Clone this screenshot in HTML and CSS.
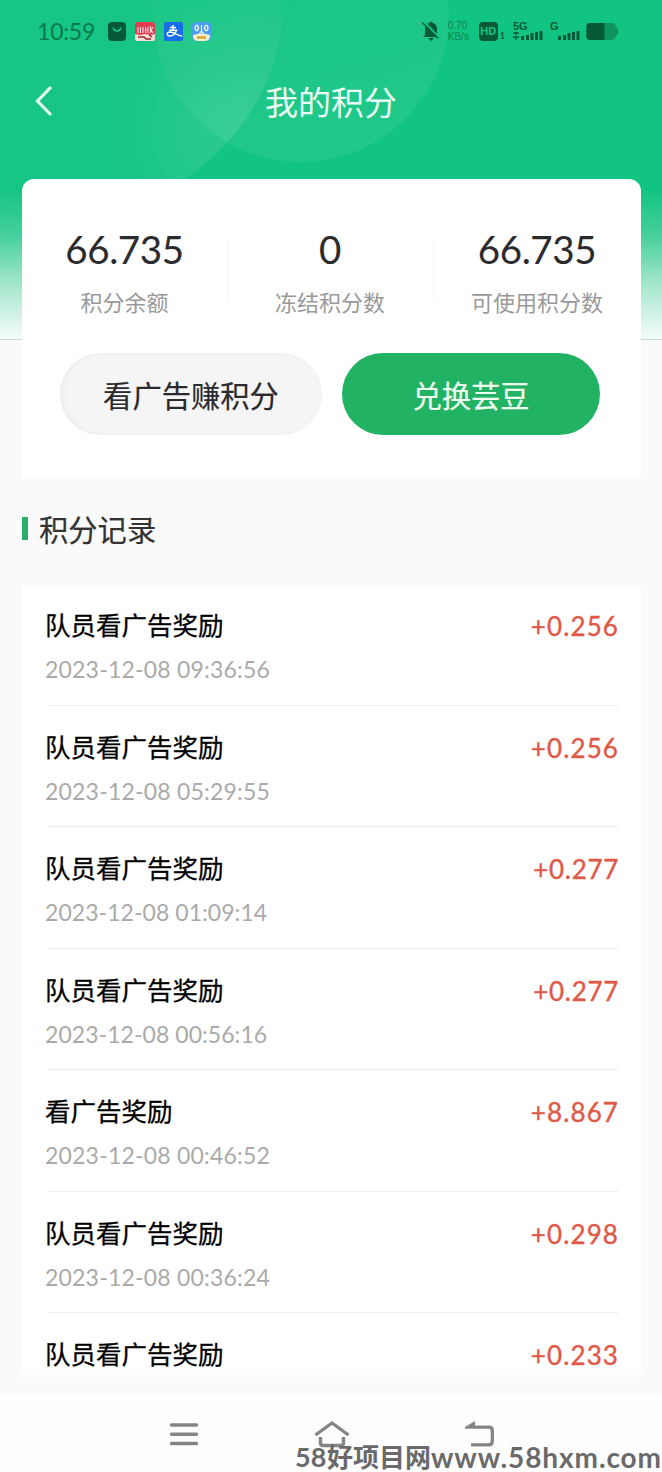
FILE: index.html
```
<!DOCTYPE html>
<html lang="zh-CN">
<head>
<meta charset="utf-8">
<title>我的积分</title>
<link rel="stylesheet" href="styles.css">
</head>
<body>
<div class="phone">
  <header class="hero">
    <svg class="hero-art" viewBox="0 0 662 340" aria-hidden="true">
      <defs>
        <radialGradient id="ringA" gradientUnits="userSpaceOnUse" cx="240" cy="130" r="130"><stop offset="0" stop-color="#fff" stop-opacity=".12"/><stop offset="1" stop-color="#fff" stop-opacity=".02"/></radialGradient>
        <linearGradient id="ringB" x1="0" y1="0" x2=".3" y2="1"><stop offset=".2" stop-color="#fff" stop-opacity=".02"/><stop offset="1" stop-color="#fff" stop-opacity=".06"/></linearGradient>
      </defs>
      <circle cx="66" cy="-4" r="218" fill="url(#ringA)"/>
      <circle cx="301" cy="14" r="148" fill="url(#ringB)"/>
    </svg>
    <div class="status">
      <div class="status-left">
        <span class="clock">10:59</span>
        <svg width="18" height="19" viewBox="0 0 18 19"><rect width="18" height="19" rx="4" fill="#075a36"/><path d="M5 5.500c1 4.500 7 4.500 8 0" fill="none" stroke="#16c583" stroke-width="1.500"/></svg>
        <svg width="20" height="19" viewBox="0 0 20 19"><rect width="20" height="19" rx="3" fill="#e23d50"/><path d="M3 5v6M5.500 5v6M8 5v6M10.500 5v6M13 5v6M10 8h3M15.500 4v7M18 5l-2 3 2 3" stroke="#fbd9dc" stroke-width="1.100" fill="none"/><path d="M0 12l5 1 5-1 6 1 4-1v5q0 2-3 2H3q-3 0-3-2z" fill="#f5dcd5"/><path d="M3 15h6l2 2h5M14 13l3 2" stroke="#9c2430" stroke-width="1.500" fill="none"/></svg>
        <svg width="19" height="19" viewBox="0 0 19 19"><rect width="19" height="19" rx="2" fill="#176ee8"/><path d="M6 5.500h6M9 3v5M5 8.300h7.500c-1.500 4-3.500 5.700-6.500 5.700-4 0-3.500-4 0-4 4 0 7 3.500 12 4" fill="none" stroke="#fff" stroke-width="1.500"/></svg>
        <svg width="19" height="19" viewBox="0 0 19 19"><rect width="19" height="19" rx="4" fill="#4a9df0"/><path d="M4.500 3c-2 2-2 4 0 6M5 3c2 2 2 4 0 6M9.500 3v7M14 3c-2 2-2 4 0 6M14.500 3c2 2 2 4 0 6M9.500 9l-3 4M9.500 9l3 4" fill="none" stroke="#fff" stroke-width="1.200"/><path d="M1 13q8-3 17 0v2q-1 4-5 4H6q-4 0-5-4z" fill="#f4eecb"/><path d="M5 15.500h9" stroke="#dba62a" stroke-width="2.500"/></svg>
      </div>
      <div class="status-right">
        <svg width="18" height="20" viewBox="0 0 18 20"><path d="M3 14V8q0-5 4-6 2-3 4 0 4 1 4 6v6l2 2H1zM6 17h6l-3 3z" fill="#075a36"/><path d="M2 1l16 16" stroke="#12c481" stroke-width="1.800"/><path d="M0 1.500l16 16" stroke="#075a36" stroke-width="1.200"/></svg>
        <span class="rate"><span>0.70</span><span>KB/s</span></span>
        <span class="hd">HD</span><span class="sim">1</span>
        <svg class="net" width="30" height="20" viewBox="0 0 30 20"><text x="0" y="9" class="net-label">5G</text><path d="M3 11v3M0 12h6M0 16h6M3 16v3" stroke="#075a36" stroke-width="1.300"/><path d="M8 15h3v4H8zM13 14h3v5h-3zM17.500 12h3v7h-3zM22 11h3v8h-3zM26.500 10h3v9h-3z" fill="#075a36"/></svg>
        <svg class="net2" width="30" height="20" viewBox="0 0 30 20"><text x="0" y="9" class="net-label">G</text><path d="M8 15h3v4H8zM13 14h3v5h-3zM17.500 12h3v7h-3zM22 11h3v8h-3zM26.500 10h3v9h-3z" fill="#075a36"/></svg>
        <svg width="33" height="17" viewBox="0 0 34 18"><path d="M4 0h24q2 0 3 3l3 5v2l-3 5q-1 3-3 3H4q-4 0-4-4V4q0-4 4-4z" fill="#0e965f"/><path d="M4 0h15v18H4q-4 0-4-4V4q0-4 4-4z" fill="#075a36"/></svg>
      </div>
    </div>
    <div class="titlebar">
      <svg class="back" width="18" height="32" viewBox="0 0 18 32"><path d="M16 2L2.500 16 16 30" fill="none" stroke="#e4fff3" stroke-width="3.200"/></svg>
      <h1>我的积分</h1>
    </div>
  </header>

  <main>
    <section class="card">
      <div class="stats">
        <div class="stat"><strong>66.735</strong><span>积分余额</span></div>
        <div class="stat"><strong>0</strong><span>冻结积分数</span></div>
        <div class="stat"><strong>66.735</strong><span>可使用积分数</span></div>
      </div>
      <div class="actions">
        <button class="btn earn">看广告赚积分</button>
        <button class="btn swap">兑换芸豆</button>
      </div>
    </section>
    <h2>积分记录</h2>
    <ul class="records">
      <li><div><b>队员看广告奖励</b><time>2023-12-08 09:36:56</time></div><em>+0.256</em></li>
      <li><div><b>队员看广告奖励</b><time>2023-12-08 05:29:55</time></div><em>+0.256</em></li>
      <li><div><b>队员看广告奖励</b><time class="tight">2023-12-08 01:09:14</time></div><em class="tight">+0.277</em></li>
      <li><div><b>队员看广告奖励</b><time class="tight">2023-12-08 00:56:16</time></div><em class="tight">+0.277</em></li>
      <li><div><b>看广告奖励</b><time>2023-12-08 00:46:52</time></div><em>+8.867</em></li>
      <li><div><b>队员看广告奖励</b><time>2023-12-08 00:36:24</time></div><em>+0.298</em></li>
      <li><div><b>队员看广告奖励</b></div><em>+0.233</em></li>
    </ul>
  </main>

  <nav class="navbar">
    <svg width="28" height="24" viewBox="0 0 28 24"><path d="M1.500 3h25M1.500 12.300h25M1.500 21.500h25" stroke="#858585" stroke-width="3.400" stroke-linecap="round"/></svg>
    <svg width="36" height="28" viewBox="0 0 36 28"><path d="M1.500 15L18 3l16.500 12M6.500 17v6q0 2.500 2.500 2.500h18q2.500 0 2.500-2.500v-6" fill="none" stroke="#858585" stroke-width="3.400"/></svg>
    <svg width="30" height="26" viewBox="0 0 30 26"><path d="M0 6L10 0v4.500h14q5 0 5 5V20q0 5.500-5 5.500H6v-3.200h17q2.700 0 2.700-2.500V10q0-2.300-2.700-2.300H0z" fill="#858585"/></svg>
  </nav>
  <div class="watermark"><span class="wm-num">58</span><span class="wm-cn">好项目网</span><span class="wm-url">www.58hxm.com</span></div>
</div>
</body>
</html>
```
FILE: styles.css
```
* { box-sizing: border-box; margin: 0; padding: 0; }
body { width: 662px; height: 1472px; overflow: hidden; font-family: Lato, "Noto Sans CJK SC", sans-serif; }
.phone { position: relative; display: flex; flex-direction: column; height: 1472px; background: #fafafa; }
.hero { position: relative; height: 340px; margin-bottom: -161px; flex: none; border-bottom: 1px solid #c3dcd9; background: linear-gradient(#12c481 0, #12c481 190px, #45d09b 235px, #a5e7cd 285px, #f4fbf9 338px); }
.hero-art { position: absolute; inset: 0; width: 662px; height: 340px; }
.status { position: relative; display: flex; justify-content: space-between; padding: 20px 43px 0 37px; height: 62px; }
.status-left, .status-right { display: flex; align-items: center; height: 22px; }
.status-left { gap: 9px; }
.clock { width: 62px; font-size: 23px; letter-spacing: -.2px; color: #087a4b; white-space: nowrap; }
.status-right { color: #075a36; }
.rate { display: flex; flex-direction: column; width: 25px; margin-left: 8px; font: 10px/11px "Liberation Sans", sans-serif; color: #0a8550; }
.hd { width: 19px; height: 19px; margin-left: 6px; border-radius: 4px; background: #075a36; color: #16c583; font: bold 11px/19px "Liberation Sans", sans-serif; text-align: center; }
.sim { margin: 9px 0 0 2px; font-size: 9px; font-weight: bold; }
.net { margin-left: 8px; }
.net2 { margin-left: 7px; margin-right: 6px; }
.net-label { font: bold 11px "Liberation Sans", sans-serif; fill: #075a36; }
.titlebar { position: relative; display: flex; justify-content: center; align-items: center; height: 80px; }
.back { position: absolute; left: 35px; top: 23px; }
h1 { color: #e9fff6; font-size: 33px; line-height: 82px; font-weight: 400; }
main { position: relative; flex: 1; padding: 0 21px 0 22px; }
.card { height: 300px; padding-top: 49px; background: #fff; border-radius: 12px 12px 4px 4px; }
.stats { display: grid; grid-template-columns: 205px 206px 1fr; height: 125px; }
.stat { display: flex; flex-direction: column; align-items: center; }
.stat + .stat { background: linear-gradient(#f5f5f5, #f5f5f5) 0 12px / 1px 60px no-repeat; }
.stat strong { flex: none; font-size: 38.500px; line-height: 43px; height: 54px; font-weight: 400; letter-spacing: -.4px; color: #2b2b2e; -webkit-text-stroke: .1px; }
.stat span { font-size: 22px; line-height: 42px; color: #999; white-space: nowrap; }
.actions { display: flex; gap: 20px; padding-left: 38px; }
.btn { height: 82px; border: 0; border-radius: 41px; padding-top: 2px; font: 400 29.300px/82px Lato, "Noto Sans CJK SC", sans-serif; -webkit-text-stroke: .2px; }
.earn { width: 262px; background: #f5f5f6; color: #2b2b2e; box-shadow: inset 2px 0 4px #ebebed; }
.swap { width: 258px; background: #22b264; color: #efffef; }
h2 { display: flex; align-items: center; gap: 11px; height: 48px; margin-top: 25px; font-size: 29.300px; font-weight: 400; color: #333; -webkit-text-stroke: .2px; }
h2::before { content: ""; width: 6px; height: 23px; background: #29ad6b; }
.records { margin-top: 33px; height: 811px; background: linear-gradient(#fff 780px, #fafafa 796px); overflow: hidden; list-style: none; padding: 0 23px; }
.records li { display: flex; justify-content: space-between; height: 121.500px; padding-top: 19px; background: linear-gradient(#eee, #eee) 3px calc(100% - 1px) / 100% 1px no-repeat; }
.records b { display: block; font-size: 25.500px; line-height: 42px; font-weight: 400; color: #000; -webkit-text-stroke: .3px; }
.records time { display: block; margin-top: 2px; font-size: 23px; line-height: 42px; color: #aaa; letter-spacing: .2px; }
.records time.tight { letter-spacing: .05px; }
.records em { margin-right: -1px; font-style: normal; font-size: 26px; line-height: 44px; letter-spacing: 1.100px; color: #df5948; -webkit-text-stroke: .4px; }
.records em.tight { letter-spacing: .7px; }
.navbar { position: absolute; left: 0; bottom: 0; width: 662px; height: 76px; display: flex; justify-content: space-between; align-items: center; padding: 0 167px 0 170px; background: #fefefe; }
.watermark { position: absolute; left: 295px; top: 1438px; display: flex; align-items: center; height: 34px; white-space: nowrap; color: #6a6a6a; font-weight: bold; line-height: 34px; }
.wm-num { width: 32px; font-size: 27px; padding-top: 4px; }
.wm-cn { width: 104px; font-size: 26px; padding-top: 3px; }
.wm-url { font-size: 28px; padding-top: 4px; letter-spacing: .9px; }
```
